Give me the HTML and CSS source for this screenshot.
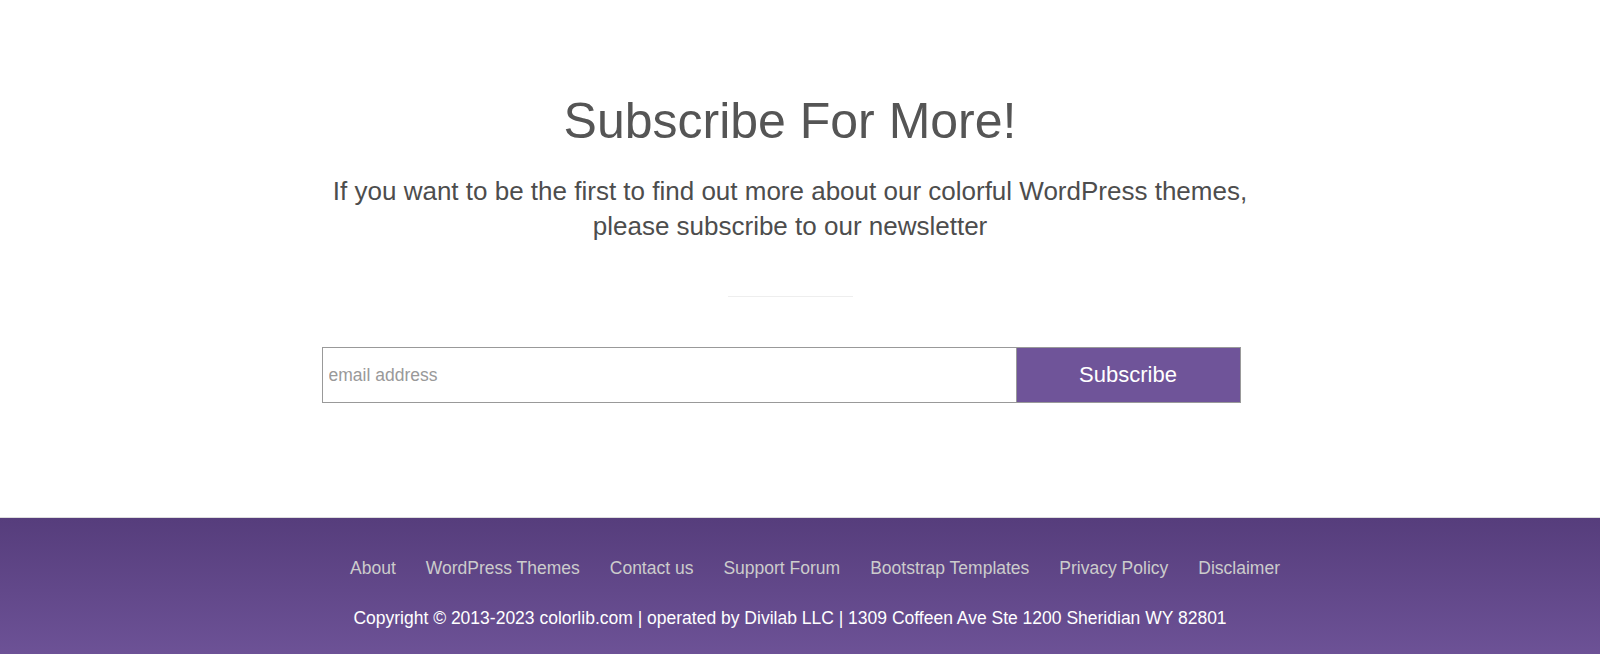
FILE: index.html
```html
<!DOCTYPE html>
<html lang="en">
<head>
  <meta charset="UTF-8" />
  <meta name="viewport" content="width=device-width, initial-scale=1.0" />
  <title>Subscribe</title>
  <link rel="stylesheet" href="styles.css">
</head>
<body>
  <section class="subscribe">
    <h2 class="subscribe-title">Subscribe For More!</h2>
    <p class="subscribe-lead">If you want to be the first to find out more about our colorful WordPress themes,<br>please subscribe to our newsletter</p>
    <hr class="divider" />
    <form class="subscribe-form" onsubmit="return false;">
      <input type="email" placeholder="email address" />
      <button type="submit">Subscribe</button>
    </form>
  </section>

  <footer class="site-footer">
    <ul class="footer-links">
      <li><a href="#">About</a></li>
      <li><a href="#">WordPress Themes</a></li>
      <li><a href="#">Contact us</a></li>
      <li><a href="#">Support Forum</a></li>
      <li><a href="#">Bootstrap Templates</a></li>
      <li><a href="#">Privacy Policy</a></li>
      <li><a href="#">Disclaimer</a></li>
    </ul>
    <p class="copyright">Copyright &copy; 2013-2023 colorlib.com | operated by Divilab LLC | 1309 Coffeen Ave Ste 1200 Sheridian WY 82801</p>
  </footer>
</body>
</html>
```

FILE: styles.css
```css
:root {
  --purple-dark: #563d7c;
  --purple: #6f5499;
  --text: #555555;
  --line: #eeeeee;
}
* {
  box-sizing: border-box;
}
body {
  margin: 0;
  background-color: #fff;
  font-family: "Liberation Sans", Arial, sans-serif;
  color: var(--text);
}
.subscribe {
  display: flex;
  flex-direction: column;
  align-items: center;
  padding: 94px 20px 114px 0;
  text-align: center;
}
.subscribe-title {
  margin: 0;
  font-size: 50px;
  font-weight: 400;
  line-height: 55px;
  color: #555;
}
.subscribe-lead {
  margin: 25px 0 0;
  font-size: 26px;
  line-height: 35px;
  color: #4d4d4d;
}
.divider {
  width: 125px;
  height: 0;
  margin: 52px 0 0;
  border: 0;
  border-top: 1px solid var(--line);
}
.subscribe-form {
  display: flex;
  width: 919px;
  margin: 50px 18px 0 0;
}
.subscribe-form input {
  flex: 1;
  height: 56px;
  padding: 0 6px;
  border: 1px solid #999;
  border-right: 0;
  font-family: inherit;
  font-size: 17.5px;
  color: #555;
  outline: none;
}
.subscribe-form input::placeholder {
  color: #999;
}
.subscribe-form button {
  width: 225px;
  height: 56px;
  border: 1px solid #999;
  background-color: var(--purple);
  color: #fff;
  font-family: inherit;
  font-size: 22px;
  cursor: pointer;
}
.site-footer {
  border-top: 1px solid #ddd;
  background-image: linear-gradient(to bottom, var(--purple-dark) 0, var(--purple) 100%);
  padding: 38px 0 40px;
  text-align: center;
}
.footer-links {
  display: flex;
  justify-content: center;
  gap: 30px;
  margin: 0;
  padding: 0 0 0 30px;
  list-style: none;
  font-size: 17.5px;
  line-height: 24px;
}
.footer-links a {
  color: #cccccc;
  text-decoration: none;
}
.footer-links a:hover {
  color: #fff;
}
.copyright {
  margin: 27px 20px 0 0;
  font-size: 17.5px;
  line-height: 22px;
  color: #fff;
}
```
